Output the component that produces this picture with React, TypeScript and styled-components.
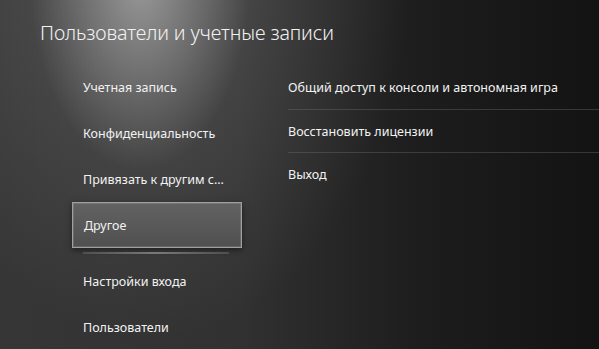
import React from 'react'
import styled, { createGlobalStyle } from 'styled-components'

const GlobalStyle = createGlobalStyle`
  html, body {
    margin: 0;
    padding: 0;
    background: #1a1a1a;
  }
  * { box-sizing: border-box; }
`

const Screen = styled.div`
  width: 599px;
  height: 349px;
  overflow: hidden;
  font-family: 'Noto Sans', 'Open Sans', sans-serif;
  color: #f2f2f2;
  background:
    radial-gradient(ellipse 110px 190px at 140px -20px, rgba(210,210,210,.55), rgba(200,200,200,0) 100%),
    radial-gradient(ellipse 260px 380px at 150px -40px, rgba(160,160,160,.3), rgba(160,160,160,0) 100%),
    linear-gradient(to right, #363636 0%, #313131 40%, #1d1d1d 70%, #131313 100%);
`

const Title = styled.h1`
  margin: 0;
  padding: 21px 0 0 40px;
  font-size: 19.6px;
  line-height: 24px;
  font-weight: 300;
  letter-spacing: -0.1px;
`

const Columns = styled.div`
  display: grid;
  grid-template-columns: 170px 1fr;
  column-gap: 46px;
  padding-left: 72px;
  margin-top: 19px;
`

const Menu = styled.ul`
  list-style: none;
  margin: 0;
  padding: 0;
`

const MenuItem = styled.li<{ $active?: boolean }>`
  height: 46px;
  display: flex;
  align-items: center;
  padding-left: 11px;
  font-size: 12.5px;
  white-space: nowrap;
  ${p => p.$active && `
    border: 1px solid #a0a0a0;
    background: linear-gradient(to bottom, #626262, #505050);
    box-shadow: inset 0 0 0 1px rgba(255,255,255,.12), 0 2px 6px rgba(0,0,0,.5);
    margin-bottom: 10px;
    position: relative;
    &::after {
      content: '';
      position: absolute;
      left: 10px;
      right: 12px;
      bottom: -7px;
      height: 2px;
      background: linear-gradient(to right, rgba(140,140,140,.3), rgba(150,150,150,.7) 50%, rgba(140,140,140,.3));
    }
  `}
`

const Options = styled.ul`
  list-style: none;
  margin: 2px 0 0 0;
  padding: 0;
`

const Option = styled.li`
  height: 43px;
  display: flex;
  align-items: center;
  font-size: 12.5px;
  white-space: nowrap;
  & + & {
    border-top: 1px solid rgba(120,120,120,.35);
  }
`

const menu = [
  'Учетная запись',
  'Конфиденциальность',
  'Привязать к другим с...',
  'Другое',
  'Настройки входа',
  'Пользователи',
]

const options = [
  'Общий доступ к консоли и автономная игра',
  'Восстановить лицензии',
  'Выход',
]

const App: React.FC = () => {
  return (
    <Screen>
      <GlobalStyle />
      <Title>Пользователи и учетные записи</Title>
      <Columns>
        <Menu>
          {menu.map(m => (
            <MenuItem key={m} $active={m === 'Другое'}>{m}</MenuItem>
          ))}
        </Menu>
        <Options>
          {options.map(o => <Option key={o}>{o}</Option>)}
        </Options>
      </Columns>
    </Screen>
  )
}

export default App
